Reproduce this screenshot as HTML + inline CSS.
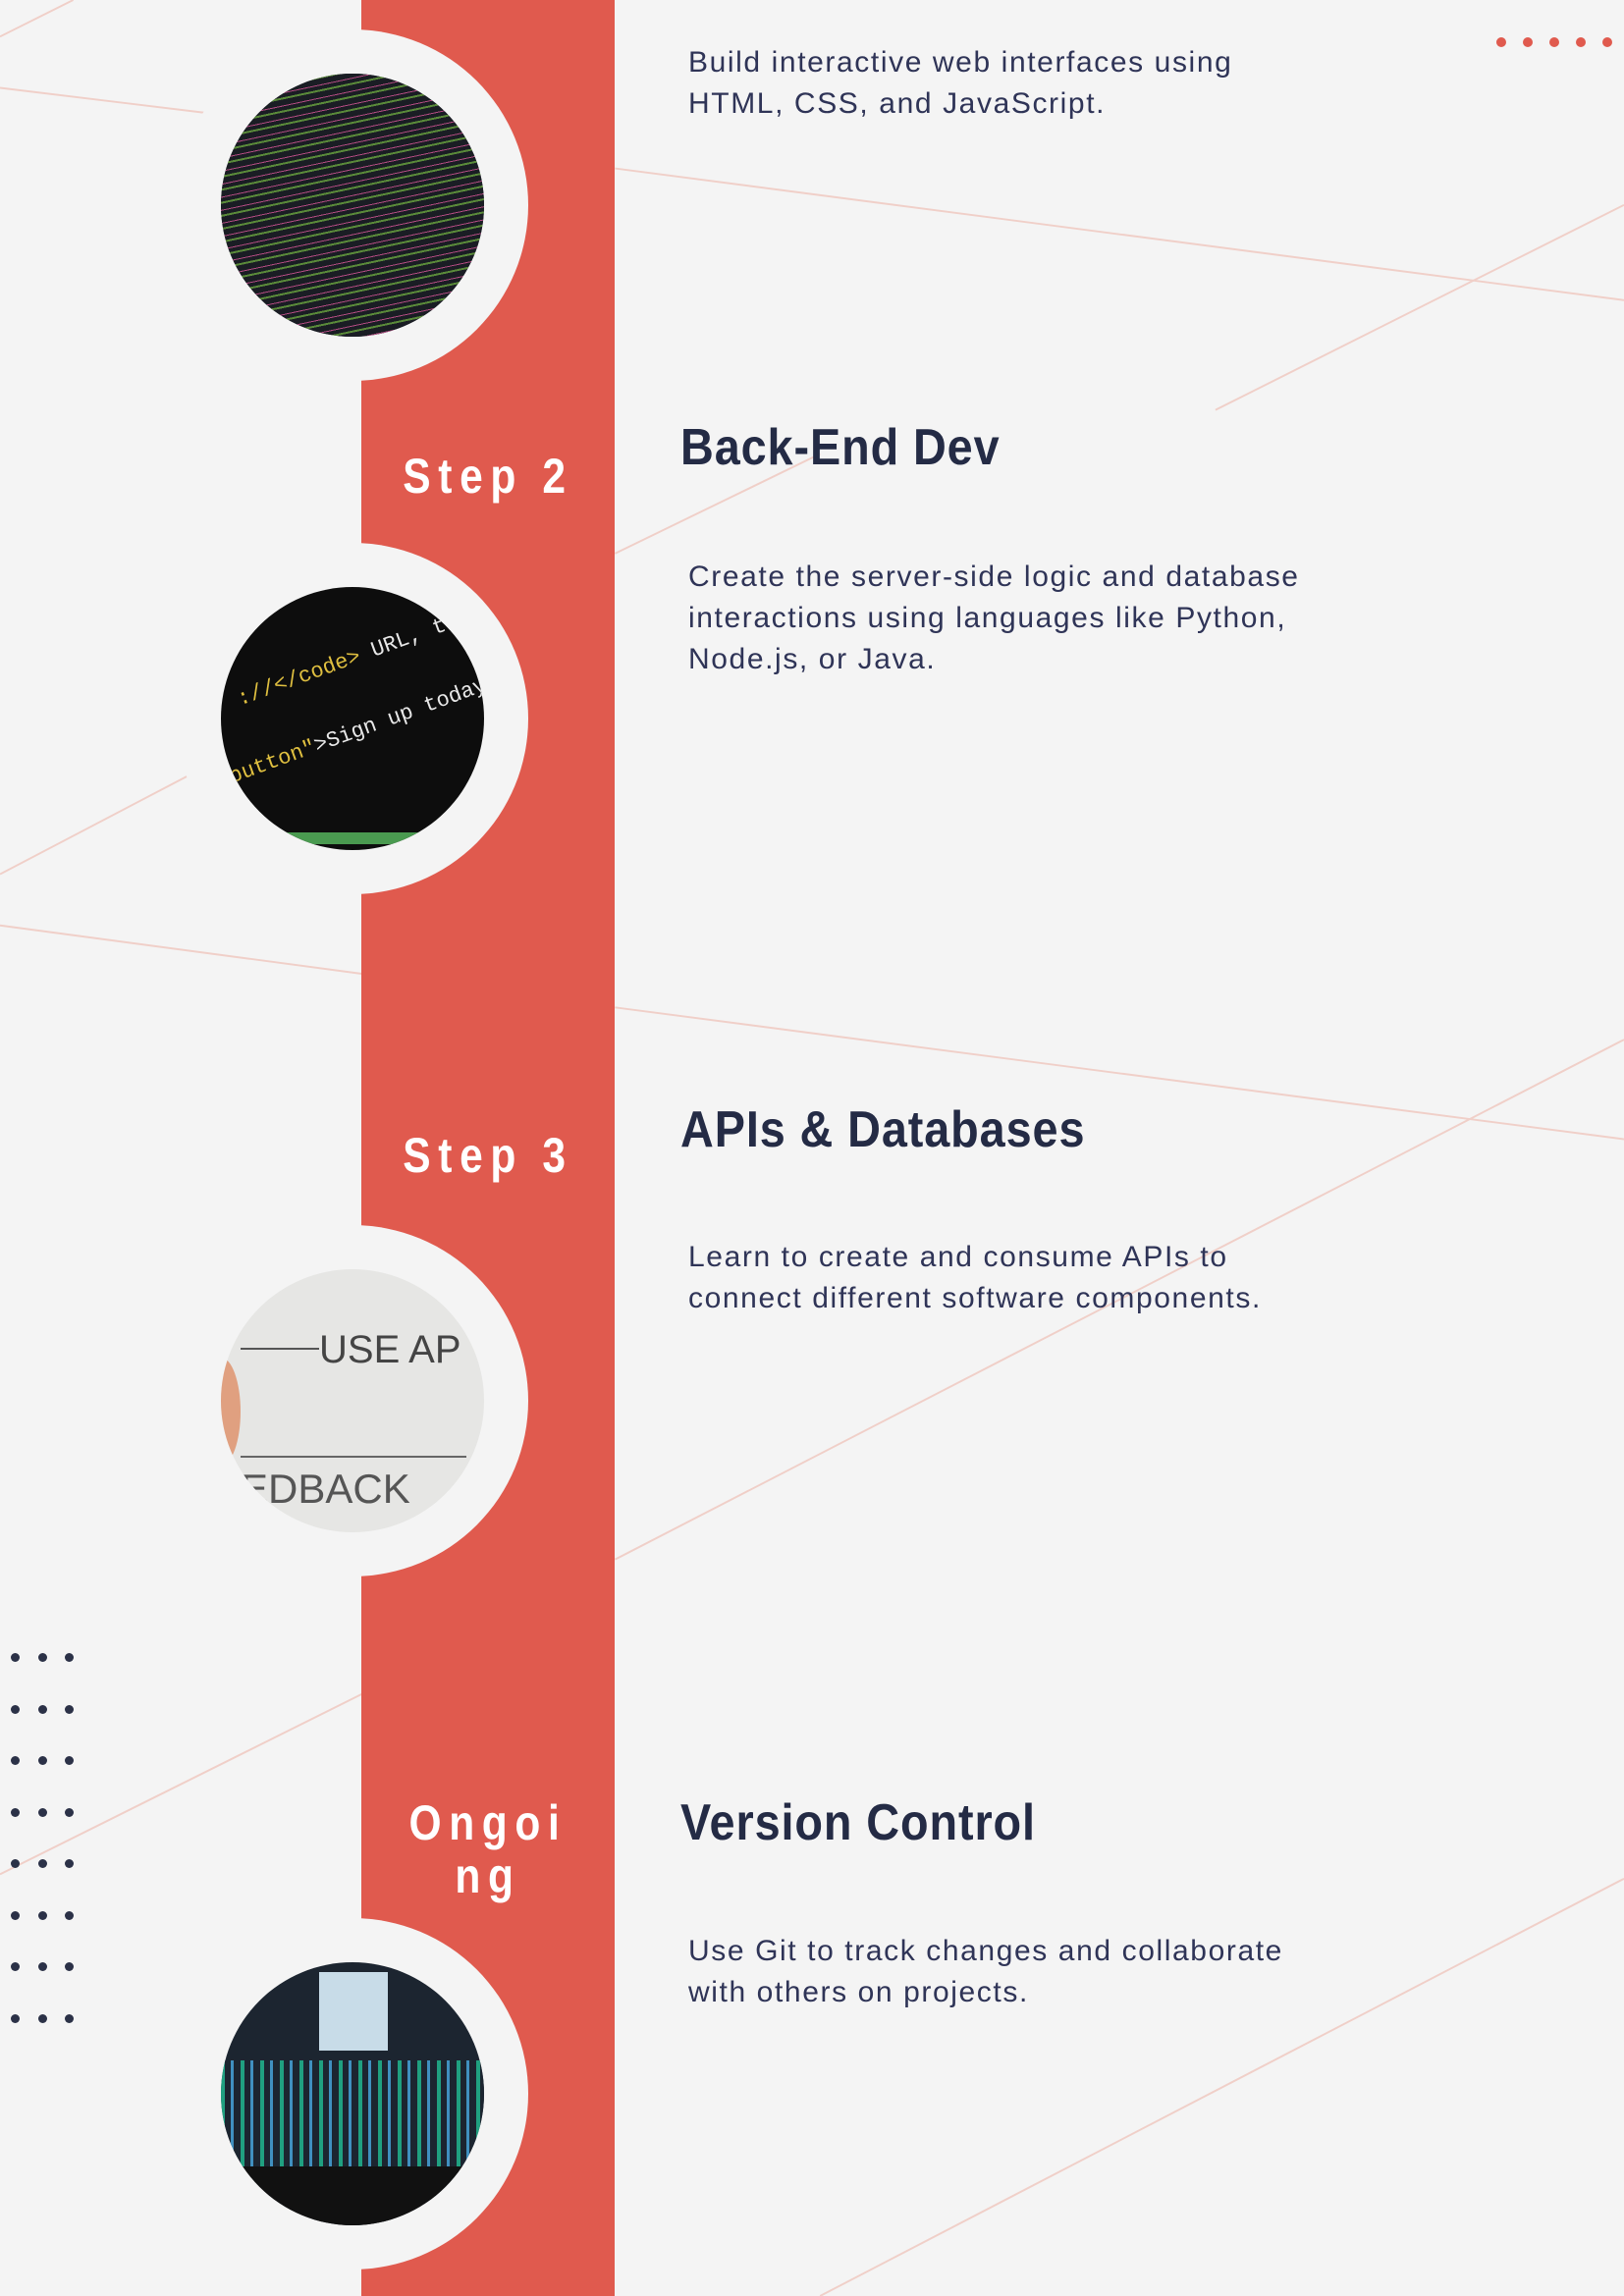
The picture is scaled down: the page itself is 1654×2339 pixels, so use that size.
<!DOCTYPE html>
<html><head><meta charset="utf-8"><style>
body{margin:0;width:1654px;height:2339px;background:#f4f4f4;position:relative;overflow:hidden;font-family:"Liberation Sans",sans-serif}
.bar{position:absolute;left:368px;top:0;width:258px;height:2339px;background:#e05a4e}
.ring{position:absolute;width:358px;height:358px;border-radius:50%;background:#f4f4f4;left:180px}
.ph{position:absolute;width:268px;height:268px;border-radius:50%;left:225px;overflow:hidden}
.step{position:absolute;left:368px;width:258px;text-align:center;color:#fff;font-weight:bold;font-size:50px;letter-spacing:9px;line-height:54px;transform:scaleX(.85)}
h2{position:absolute;left:693px;margin:0;font-size:52px;color:#242b45;font-weight:bold;transform:scaleX(.9);transform-origin:left;white-space:nowrap;letter-spacing:1px}
p{position:absolute;left:701px;margin:0;font-size:30px;line-height:42px;color:#2f3457;letter-spacing:1.6px}
.dot{position:absolute;border-radius:50%}
.code{position:absolute;font-family:"Liberation Mono",monospace;white-space:nowrap}
</style></head><body>
<svg style="position:absolute;left:0;top:0" width="1654" height="2339" viewBox="0 0 1109 1568" preserveAspectRatio="none">
<g stroke="#f0cfc8" stroke-width="1.3" fill="none">
<line x1="0" y1="60" x2="140" y2="77"/><line x1="0" y1="25" x2="50" y2="0"/>
<line x1="420" y1="115" x2="1109" y2="205"/><line x1="830" y1="280" x2="1109" y2="140"/>
<line x1="420" y1="378" x2="560" y2="310"/><line x1="0" y1="597" x2="128" y2="530"/>
<line x1="0" y1="632" x2="247" y2="665"/><line x1="420" y1="688" x2="1109" y2="778"/>
<line x1="420" y1="1065" x2="1109" y2="710"/><line x1="0" y1="1280" x2="247" y2="1157"/>
<line x1="560" y1="1568" x2="1109" y2="1283"/>
</g></svg>
<div class="bar"></div>
<div class="ring" style="top:30px"></div>
<div class="ring" style="top:553px"></div>
<div class="ring" style="top:1248px"></div>
<div class="ring" style="top:1954px"></div>
<div class="ph" style="top:75px;background:#1a1d24">
<div style="position:absolute;inset:0;background:repeating-linear-gradient(-12deg,#1a1d24 0 6px,#5a8a3a 6px 8px,#1a1d24 8px 12px,#b04a80 12px 13px)"></div></div>
<div class="ph" style="top:598px;background:#0d0d0d">
<div class="code" style="left:10px;top:60px;color:#e8e8e8;font-size:22px;transform:rotate(-20deg)"><span style="color:#e0c040">://&lt;/code&gt;</span> URL, the</div>
<div class="code" style="left:0;top:130px;color:#e8e8e8;font-size:22px;transform:rotate(-20deg)"><span style="color:#e0c040">button"</span>&gt;Sign up today&lt;/</div>
<div style="position:absolute;left:60px;top:250px;width:150px;height:12px;background:#4a9a50"></div></div>
<div class="ph" style="top:1293px;background:#e6e6e4">
<div style="position:absolute;left:100px;top:60px;font-size:40px;color:#444">USE AP</div>
<div style="position:absolute;left:20px;top:80px;width:80px;height:2px;background:#555"></div>
<div style="position:absolute;left:20px;top:190px;width:230px;height:2px;background:#666"></div>
<div style="position:absolute;left:20px;top:200px;font-size:42px;color:#555">EDBACK</div>
<div style="position:absolute;left:-20px;top:90px;width:40px;height:110px;border-radius:50%;background:#e0a080"></div></div>
<div class="ph" style="top:1999px;background:#1c2530">
<div style="position:absolute;left:100px;top:10px;width:70px;height:80px;background:#c8dce8"></div>
<div style="position:absolute;inset:100px 0 60px 0;background:repeating-linear-gradient(90deg,#20a080 0 4px,#1c2530 4px 10px,#4090c0 10px 13px,#1c2530 13px 20px)"></div>
<div style="position:absolute;left:0;right:0;bottom:0;height:60px;background:#111"></div></div>
<div class="step" style="top:458px">Step 2</div>
<div class="step" style="top:1150px">Step 3</div>
<div class="step" style="top:1830px">Ongoi<br>ng</div>
<p style="top:43px">Build interactive web interfaces using<br>HTML, CSS, and JavaScript.</p>
<h2 style="top:426px">Back-End Dev</h2>
<p style="top:567px">Create the server-side logic and database<br>interactions using languages like Python,<br>Node.js, or Java.</p>
<h2 style="top:1121px">APIs &amp; Databases</h2>
<p style="top:1260px">Learn to create and consume APIs to<br>connect different software components.</p>
<h2 style="top:1827px">Version Control</h2>
<p style="top:1967px">Use Git to track changes and collaborate<br>with others on projects.</p>
<div id="d"></div>
<script>
var h='';for(var i=0;i<5;i++)h+='<div class="dot" style="background:#e05a4e;width:10px;height:10px;left:'+(1524+i*27)+'px;top:38px"></div>';
for(var r=0;r<8;r++)for(var c=0;c<3;c++)h+='<div class="dot" style="background:#2b3147;width:9px;height:9px;left:'+(11+c*27.5)+'px;top:'+(1684+r*52.5)+'px"></div>';
document.getElementById('d').innerHTML=h;
</script>
</body></html>
